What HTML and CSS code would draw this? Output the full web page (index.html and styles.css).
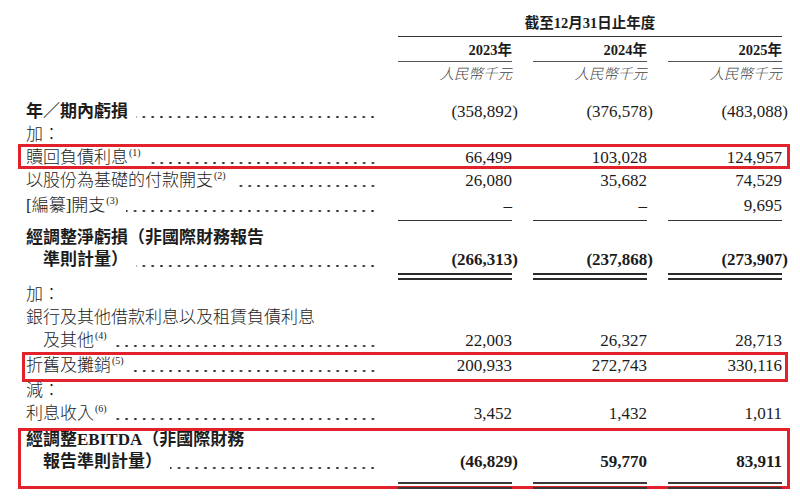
FILE: index.html
```html
<!DOCTYPE html>
<html lang="zh-Hant">
<head>
<meta charset="utf-8">
<title>EBITDA</title>
<link rel="stylesheet" href="styles.css">
</head>
<body>
<div class="sheet">
  <div class="head">
    <div class="period">截至12月31日止年度</div>
    <div class="yr c2">2023年</div>
    <div class="yr c3">2024年</div>
    <div class="yr c4">2025年</div>
    <div class="unit c2">人民幣千元</div>
    <div class="unit c3">人民幣千元</div>
    <div class="unit c4">人民幣千元</div>
  </div>

  <div class="row r-loss bold">
    <div class="label"><span class="txt">年／期內虧損</span><span class="lead"></span></div>
    <div class="num plain">(358,892<span class="rp">)</span></div>
    <div class="num plain">(376,578<span class="rp">)</span></div>
    <div class="num plain">(483,088<span class="rp">)</span></div>
  </div>

  <div class="row">
    <div class="label"><span class="txt">加：</span></div>
  </div>

  <div class="row hl hl1">
    <div class="label"><span class="txt">贖回負債利息<sup class="fn">(1)</sup></span><span class="lead"></span></div>
    <div class="num">66,499</div>
    <div class="num">103,028</div>
    <div class="num">124,957</div>
  </div>

  <div class="row">
    <div class="label"><span class="txt">以股份為基礎的付款開支<sup class="fn">(2)</sup></span><span class="lead"></span></div>
    <div class="num">26,080</div>
    <div class="num">35,682</div>
    <div class="num">74,529</div>
  </div>

  <div class="row r-redact">
    <div class="label"><span class="txt">[編纂]開支<sup class="fn">(3)</sup></span><span class="lead"></span></div>
    <div class="num sub">–</div>
    <div class="num sub">–</div>
    <div class="num sub">9,695</div>
  </div>

  <div class="row multi r-adj bold">
    <div class="label">
      <div class="line">經調整淨虧損（非國際財務報告</div>
      <div class="line indent"><span class="txt">準則計量）</span><span class="lead"></span></div>
    </div>
    <div class="num dbl">(266,313<span class="rp">)</span></div>
    <div class="num dbl">(237,868<span class="rp">)</span></div>
    <div class="num dbl">(273,907<span class="rp">)</span></div>
  </div>

  <div class="row r-add2">
    <div class="label"><span class="txt">加：</span></div>
  </div>

  <div class="row">
    <div class="label"><span class="txt">銀行及其他借款利息以及租賃負債利息</span></div>
  </div>

  <div class="row">
    <div class="label indent"><span class="txt">及其他<sup class="fn">(4)</sup></span><span class="lead"></span></div>
    <div class="num">22,003</div>
    <div class="num">26,327</div>
    <div class="num">28,713</div>
  </div>

  <div class="row hl hl2">
    <div class="label"><span class="txt">折舊及攤銷<sup class="fn">(5)</sup></span><span class="lead"></span></div>
    <div class="num">200,933</div>
    <div class="num">272,743</div>
    <div class="num">330,116</div>
  </div>

  <div class="row r-less">
    <div class="label"><span class="txt">減：</span></div>
  </div>

  <div class="row">
    <div class="label"><span class="txt">利息收入<sup class="fn">(6)</sup></span><span class="lead"></span></div>
    <div class="num">3,452</div>
    <div class="num">1,432</div>
    <div class="num">1,011</div>
  </div>

  <div class="row multi hl hl3 r-ebitda bold">
    <div class="label">
      <div class="line">經調整EBITDA（非國際財務</div>
      <div class="line indent"><span class="txt">報告準則計量）</span><span class="lead"></span></div>
    </div>
    <div class="num dbl thick">(46,829<span class="rp">)</span></div>
    <div class="num dbl thick">59,770</div>
    <div class="num dbl thick">83,911</div>
  </div>
</div>
</body>
</html>
```

FILE: styles.css
```css
html, body {
  margin: 0;
  padding: 0;
  background: #ffffff;
}

.sheet {
  padding-left: 26px;
  width: 756px;
  color: #1c1c1c;
  font-family: "Liberation Serif", "Noto Sans CJK TC", serif;
}

/* header */
.head {
  display: grid;
  grid-template-columns: 351px 114px 114px 114px;
  column-gap: 21px;
  font-size: 14.5px;
}
.period {
  grid-column: 2 / 5;
  text-align: center;
  font-weight: 700;
  padding-top: 13px;
  padding-bottom: 3px;
  line-height: 20px;
  border-bottom: 1px solid #333;
}
.c2 { grid-column: 2; }
.c3 { grid-column: 3; }
.c4 { grid-column: 4; }
.yr {
  grid-row: 2;
  text-align: right;
  font-weight: 700;
  padding-top: 3px;
  padding-bottom: 1px;
  line-height: 20px;
  border-bottom: 1px solid #555;
}
.unit {
  grid-row: 3;
  text-align: right;
  font-style: italic;
  font-weight: 300;
  color: #444;
  padding-top: 2px;
  line-height: 20px;
}

/* body rows */
.row {
  position: relative;
  display: grid;
  grid-template-columns: 351px 114px 114px 114px;
  column-gap: 21px;
  font-size: 17px;
  line-height: 23px;
}
.r-loss { margin-top: 16px; }
.r-redact { margin-top: 2px; }
.r-adj { margin-top: 5.5px; }
.r-add2 { margin-top: 3px; }
.hl2 { margin-top: 1.5px; }
.r-less { margin-top: 3px; line-height: 22px; }
.r-ebitda { margin-top: 4px; }

.label {
  display: flex;
  align-self: start;
  font-weight: 300;
  white-space: nowrap;
}
.bold .label { font-weight: 700; }
.multi .label {
  display: block;
  line-height: 22.5px;
}
.r-adj .label { padding-bottom: 8.5px; }
.r-ebitda .label { padding-bottom: 15px; }
.line { display: flex; }
.indent { padding-left: 17px; }

.lead {
  flex: 1;
  margin-left: 8px;
  background-image: radial-gradient(circle, #2a2a2a 0.95px, rgba(0,0,0,0) 1.4px);
  background-size: 8.8px 4px;
  background-repeat: repeat-x;
  background-position: right 0 bottom 4px;
}

.fn {
  font-family: "Liberation Serif", serif;
  font-size: 10px;
  font-weight: 400;
  line-height: 0;
  vertical-align: 7px;
  margin-left: 1px;
}

.num {
  text-align: right;
  font-weight: 400;
  white-space: nowrap;
}
.bold .num { font-weight: 700; }
.bold .num.plain { font-weight: 400; }
.rp { margin-right: -6px; }

.sub {
  padding-bottom: 3px;
  border-bottom: 1px solid #333;
}
.multi .num {
  align-self: end;
  line-height: 22.5px;
}
.dbl {
  padding-bottom: 1.5px;
  border-bottom: 7px double #2a2a2a;
}
.thick {
  position: relative;
  padding-bottom: 8px;
  border-bottom: 7px double #3a3a3a;
}

/* red highlight frames */
.hl::before {
  content: "";
  position: absolute;
  left: -8px;
  right: -8px;
  top: -2px;
  bottom: 0;
  border: 3px solid #e1222a;
  pointer-events: none;
}
.hl2::before {
  left: -4px;
  right: -6px;
  top: -2px;
  bottom: -5px;
}
.hl3::before {
  top: -1px;
  bottom: 0;
}
```
